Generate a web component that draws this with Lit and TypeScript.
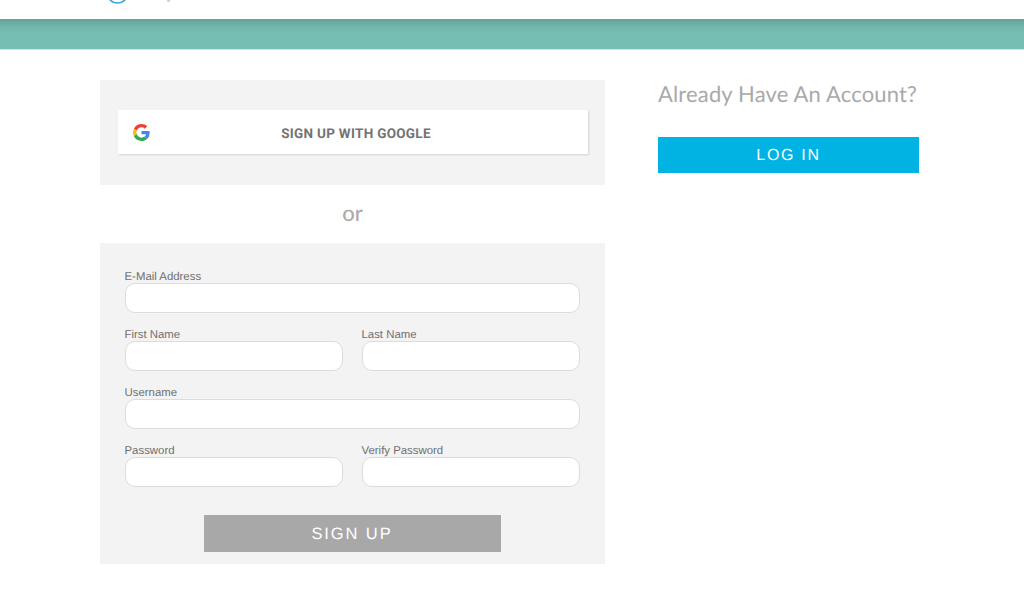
import { LitElement, html, css } from "lit";
import { customElement } from "lit/decorators.js";

@customElement("app-root")
export class AppRoot extends LitElement {
  static styles = css`
    :host { display: block; width: 1024px; height: 614px; overflow: hidden; background: #fff; font-family: "Liberation Sans", Arial, sans-serif; text-rendering: geometricPrecision; }
    * { box-sizing: border-box; }
    .top { height: 19px; background: #fff; position: relative; overflow: hidden; padding-left: 106px; display: flex; gap: 38px; }
    .logo { display: block; margin-top: -19px; flex: none; }
    .logo-dot { width: 3px; height: 2px; background: #cfcfcf; border-radius: 0 0 2px 2px; flex: none; }
    .band { height: 31px; background: linear-gradient(#64a298 0, #72b6ab 8px, #76bdb3 14px, #76bdb3 100%); box-shadow: 0 -1px 0 #d9d9d9; border-bottom: 1px solid #cde6e2; }
    .main { display: flex; padding: 30px 0 0 100px; gap: 53px; align-items: flex-start; }
    .left { width: 505px; flex: none; }
    .panel { background: #f3f3f3; }
    .google-panel { height: 105px; padding: 30px 17px 0 18px; }
    .google { height: 44px; background: #fff; box-shadow: 1px 1px 2px rgba(0,0,0,0.14); display: flex; align-items: center; padding-left: 15px; }
    .google svg { display: block; flex: none; }
    .google span { flex: 1; text-align: center; font: 700 13.5px Roboto, sans-serif; letter-spacing: 0.3px; color: #737373; padding-right: 26px; padding-top: 4px; }
    .or { height: 58px; display: flex; align-items: center; justify-content: center; font: 500 22px Lato, sans-serif; color: #ababab; padding-bottom: 3px; }
    .form-panel { height: 321px; padding: 26px 25px 0 25px; }
    .grid { display: grid; grid-template-columns: 218px 218px; column-gap: 19px; row-gap: 14px; }
    .full { grid-column: 1 / 3; }
    label { display: block; height: 14px; margin-left: -0.5px; font-size: 11.4px; line-height: 17px; color: #6e6e6e; }
    .input { height: 30px; background: #fff; border: 1px solid #dcdcdc; border-radius: 10px; }
    .actions { display: flex; justify-content: center; padding: 28px 0 0 0; margin-left: -1px; }
    .btn { display: flex; align-items: center; justify-content: center; color: #fff; font-size: 16.5px; letter-spacing: 1.9px; height: 36px; padding-top: 1px; }
    .signup { width: 297px; background: #a8a8a8; height: 37px; }
    .right { width: 261px; flex: none; }
    h2 { margin: 0; font: 400 22px/27px Lato, sans-serif; color: #a9a9a9; letter-spacing: 0.15px; white-space: nowrap; }
    .login { background: #00b3e3; margin-top: 30px; font-size: 16px; letter-spacing: 1.7px; }
  `;

  render() {
    return html`
      <div class="top">
        <svg class="logo" width="23" height="23" viewBox="0 0 23 23"><circle cx="11.5" cy="11.5" r="10.5" fill="none" stroke="#3aa6dc" stroke-width="1.6"/></svg>
        <div class="logo-dot"></div>
      </div>
      <div class="band"></div>
      <div class="main">
        <div class="left">
          <div class="panel google-panel">
            <div class="google">
              <svg width="17" height="17" viewBox="0 0 48 48">
                <path fill="#EA4335" d="M24 9.5c3.54 0 6.71 1.22 9.21 3.6l6.85-6.85C35.9 2.38 30.47 0 24 0 14.62 0 6.51 5.38 2.56 13.22l7.98 6.19C12.43 13.72 17.74 9.5 24 9.5z"/>
                <path fill="#4285F4" d="M46.98 24.55c0-1.57-.15-3.09-.38-4.55H24v9.02h12.94c-.58 2.96-2.26 5.48-4.78 7.18l7.73 6c4.51-4.18 7.09-10.36 7.09-17.65z"/>
                <path fill="#FBBC05" d="M10.53 28.59c-.48-1.45-.76-2.99-.76-4.59s.27-3.14.76-4.59l-7.98-6.19C.92 16.46 0 20.12 0 24c0 3.88.92 7.54 2.56 10.78l7.97-6.19z"/>
                <path fill="#34A853" d="M24 48c6.48 0 11.93-2.13 15.89-5.81l-7.73-6c-2.15 1.45-4.92 2.3-8.16 2.3-6.26 0-11.57-4.22-13.47-9.91l-7.98 6.19C6.51 42.62 14.62 48 24 48z"/>
              </svg>
              <span>SIGN UP WITH GOOGLE</span>
            </div>
          </div>
          <div class="or">or</div>
          <div class="panel form-panel">
            <div class="grid">
              <div class="full"><label>E-Mail Address</label><div class="input"></div></div>
              <div><label>First Name</label><div class="input"></div></div>
              <div><label>Last Name</label><div class="input"></div></div>
              <div class="full"><label>Username</label><div class="input"></div></div>
              <div><label>Password</label><div class="input"></div></div>
              <div><label>Verify Password</label><div class="input"></div></div>
            </div>
            <div class="actions"><div class="btn signup">SIGN UP</div></div>
          </div>
        </div>
        <div class="right">
          <h2>Already Have An Account?</h2>
          <div class="btn login">LOG IN</div>
        </div>
      </div>
    `;
  }
}
